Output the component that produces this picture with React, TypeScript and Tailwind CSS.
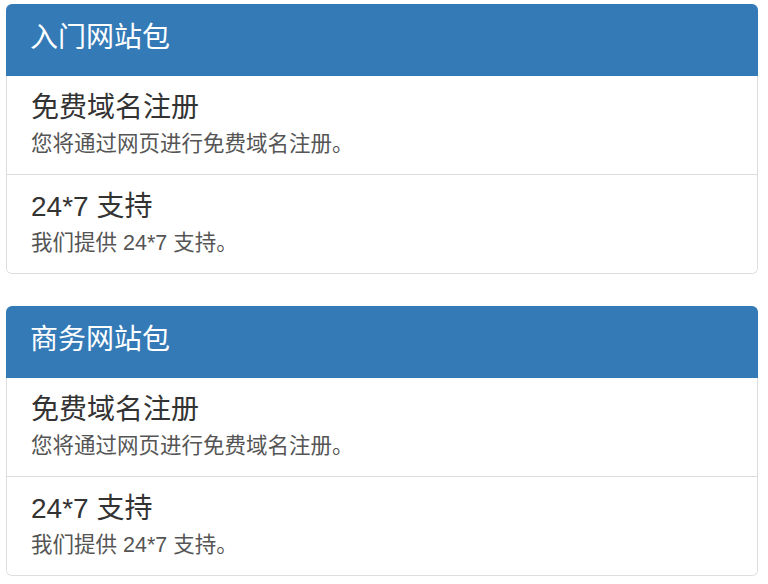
import React from "react";

const font = { fontFamily: '"Liberation Sans", "Noto Sans CJK SC", sans-serif' };

function Item({ title, text, first }: { title: string; text: string; first?: boolean }) {
  return (
    <div className={`px-[24px] pt-[17px] pb-[15px] bg-white ${first ? "" : "border-t border-[#ddd]"}`}>
      <div className="text-[28px] leading-[30px] text-[#333] mb-[6px]">{title}</div>
      <div className="text-[21.5px] leading-[30px] text-[#555]">{text}</div>
    </div>
  );
}

function Panel({ title }: { title: string }) {
  return (
    <div className="w-[752px]">
      <div className="bg-[#337ab7] rounded-t-[6px] h-[72px] px-[24px] pt-[14px] text-white text-[28px] leading-[40px]">
        {title}
      </div>
      <div className="border-x border-b border-[#ddd] rounded-b-[6px] overflow-hidden">
        <Item first title="免费域名注册" text="您将通过网页进行免费域名注册。" />
        <Item title="24*7 支持" text="我们提供 24*7 支持。" />
      </div>
    </div>
  );
}

export default function App() {
  return (
    <div className="bg-white w-[768px] h-[584px] pt-[4px] pl-[6px] flex flex-col gap-[32px]" style={font}>
      <Panel title="入门网站包" />
      <Panel title="商务网站包" />
    </div>
  );
}
